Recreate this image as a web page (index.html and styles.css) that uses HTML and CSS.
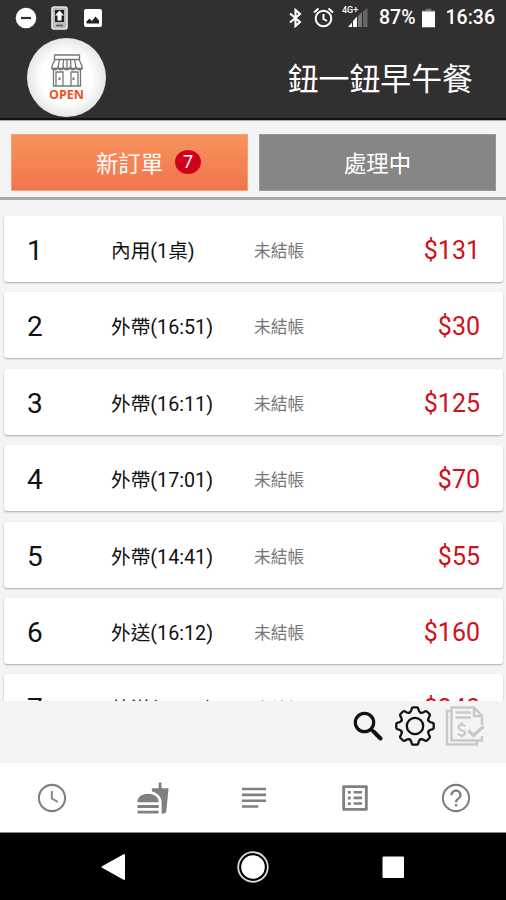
FILE: index.html
```html
<!DOCTYPE html>
<html lang="zh-Hant">
<head>
    <meta charset="UTF-8">
    <meta name="viewport" content="width=device-width, initial-scale=1.0">
    <title>鈕一鈕早午餐</title>
    <link rel="stylesheet" href="styles.css">
</head>
<body>
    <header>
        <div class="status-bar">
            <div class="status-left">
                <svg width="22" height="22" viewBox="0 0 22 22"><circle cx="11" cy="11" r="10.3" fill="#fff"/><path d="M6 11h10" stroke="#322f30" stroke-width="2.2"/></svg>
                <svg width="17" height="24" viewBox="0 0 17 24"><rect x="1" y="1" width="15" height="22" rx="2" fill="#bbb" stroke="#e8e8e8" stroke-width="1.6"/><path d="M4 4h9v12H4z" fill="#222"/><path d="M8.5 4.5l4.500 5H10.500v5h-4V9.500H4z" fill="#fff"/><path d="M5 19.500h7" stroke="#555" stroke-width="1.500"/></svg>
                <svg width="20" height="20" viewBox="0 0 20 20"><rect x="1" y="1" width="18" height="18" rx="2" fill="#fff"/><path d="M3.500 15.500v-2l3-3 2.500 2.500 3.500-4.500 3.500 4v3z" fill="#222"/></svg>
            </div>
            <div class="status-right">
                <svg class="bluetooth" width="15" height="20" viewBox="0 0 15 20" fill="none" stroke="#fff" stroke-width="2.100"><path d="M2 5.500l10 8.500L7.500 18V2l4.500 4L2 14.500"/></svg>
                <svg class="alarm" width="21" height="21" viewBox="0 0 21 21" fill="none" stroke="#fff" stroke-width="2"><circle cx="10.500" cy="11.500" r="7.800"/><path d="M10.500 7v5l3.500 2M1 5.500l4.500-4M20 5.500l-4.500-4"/></svg>
                <div class="signal">
                    <span>4G+</span>
                    <svg width="26" height="20" viewBox="0 0 26 20"><path d="M6 19h4V14.500z" fill="#fff"/><path d="M11 19h4V8.500l-4 4.500z" fill="#fff"/><path d="M16 19h4V4l-4 4z" fill="#777"/><path d="M21 19h4.500V0L21 3.500z" fill="#666"/></svg>
                </div>
                <span class="battery-text">87%</span>
                <svg class="battery" width="13" height="20" viewBox="0 0 14 20"><path d="M4 0h6v2h4v2H0V2h4z" fill="#777"/><path d="M0 3h14v17H0z" fill="#fff"/></svg>
                <span class="time">16:36</span>
            </div>
        </div>
        <div class="title-bar">
            <div class="shop-open">
                <svg width="32" height="33" viewBox="0 0 32 33" fill="none" stroke="#777" stroke-width="1.300">
                    <path d="M3.500 1h25v4.500h-25z"/>
                    <path d="M4 5.500L1 12v2.500h30V12l-3-6.500M8.500 5.500L7 14M12.500 5.500L12 14M16 5.500V14M19.500 5.500l.5 8.500M23.500 5.500L25 14"/>
                    <path d="M1 13.500c0 3 5 3 6 0 1 3 4.500 3 5.500 0 1 3 5.500 3 6.500 0 1 3 5 3 6 0 1 3 6 3 6 0"/>
                    <path d="M2.500 16v16h27V16M5 32V18h7v14M20 32V18h7v14"/>
                    <path d="M8.500 23.500v2.500M22.500 23.500v2.500" stroke-width="2"/>
                </svg>
                <span>OPEN</span>
            </div>
            <h1>鈕一鈕早午餐</h1>
        </div>
    </header>

    <div class="tabs">
        <button class="tab active">新訂單 <span class="badge">7</span></button>
        <button class="tab">處理中</button>
    </div>

    <main class="orders">
        <div class="order">
            <span class="number">1</span>
            <span class="type">內用(1桌)</span>
            <span class="state">未結帳</span>
            <span class="price">$131</span>
        </div>
        <div class="order">
            <span class="number">2</span>
            <span class="type">外帶(16:51)</span>
            <span class="state">未結帳</span>
            <span class="price">$30</span>
        </div>
        <div class="order">
            <span class="number">3</span>
            <span class="type">外帶(16:11)</span>
            <span class="state">未結帳</span>
            <span class="price">$125</span>
        </div>
        <div class="order">
            <span class="number">4</span>
            <span class="type">外帶(17:01)</span>
            <span class="state">未結帳</span>
            <span class="price">$70</span>
        </div>
        <div class="order">
            <span class="number">5</span>
            <span class="type">外帶(14:41)</span>
            <span class="state">未結帳</span>
            <span class="price">$55</span>
        </div>
        <div class="order">
            <span class="number">6</span>
            <span class="type">外送(16:12)</span>
            <span class="state">未結帳</span>
            <span class="price">$160</span>
        </div>
        <div class="order">
            <span class="number">7</span>
            <span class="type">外送(16:30)</span>
            <span class="state">未結帳</span>
            <span class="price">$240</span>
        </div>
    </main>

    <!-- Search, settings, checkout -->
    <div class="tools">
        <svg width="30" height="30" viewBox="0 0 30 30" fill="none" stroke="#111"><circle cx="11.500" cy="11.500" r="9.200" stroke-width="3.200"/><path d="M18 18l2.500 2.500" stroke-width="3"/><path d="M20.500 20.500l7 7" stroke-width="4" stroke-linecap="round"/></svg>
        <svg width="40" height="40" viewBox="-20 -20 40 40" fill="none" stroke="#111" stroke-width="2.300" stroke-linecap="round">
            <defs><path id="tooth" d="M-5.550-13.400C-4-14-3.900-14.800-3.600-16.200Q-3.200-18.700-1.800-18.700H1.800Q3.200-18.700 3.600-16.200C3.900-14.800 4-14 5.550-13.400"/></defs>
            <use href="#tooth"/>
            <use href="#tooth" transform="rotate(45)"/>
            <use href="#tooth" transform="rotate(90)"/>
            <use href="#tooth" transform="rotate(135)"/>
            <use href="#tooth" transform="rotate(180)"/>
            <use href="#tooth" transform="rotate(225)"/>
            <use href="#tooth" transform="rotate(270)"/>
            <use href="#tooth" transform="rotate(315)"/>
            <circle r="8.200"/>
        </svg>
        <svg class="bill" width="40" height="40" viewBox="0 0 40 40" fill="none" stroke="#c9c9c9" stroke-width="2.500">
            <path d="M6 5H2v33.500h30V35"/>
            <path d="M37 19V10l-8-8.500H6.500v33H37V30"/>
            <path d="M29 2v8h7M10.500 6.500H26M10.500 11.500H26"/>
            <path d="M23.500 24.500l5 5L38.500 20.500" stroke-width="3.200"/>
            <path d="M20 20.500c-1-2-6.500-2.500-6.500 1 0 3.500 6.500 2 6.500 5.200 0 3.500-6 3.200-7 .8M16.700 16v2.500M16.700 29v2.500" stroke-width="2.200"/>
        </svg>
    </div>

    <nav class="bottom-nav">
        <a><svg viewBox="0 0 24 24"><path d="M11.990 2C6.470 2 2 6.480 2 12s4.470 10 9.990 10C17.520 22 22 17.520 22 12S17.520 2 11.990 2zM12 20.500a8.500 8.500 0 1 1 0-17 8.500 8.500 0 0 1 0 17zM12.500 7h-1.300v5.700l4.600 2.700.6-1.100-3.900-2.300z"/></svg></a>
        <a><svg viewBox="0 0 24 24"><path d="M18.060 22.990h1.660c.84 0 1.530-.64 1.630-1.460L23 5.050h-5V1h-1.970v4.050h-4.970l.3 2.340c1.710.47 3.310 1.320 4.270 2.260 1.440 1.420 2.430 2.890 2.430 5.290zM1 21.990V21h15.030v.99c0 .55-.45 1-1.010 1H2.010c-.56 0-1.010-.45-1.010-1zm15.030-7c0-8-15.030-8-15.030 0zM1.020 17h15v2h-15z"/></svg></a>
        <a><svg viewBox="0 0 24 24"><path d="M3.500 4.800h17v1.800h-17zM3.500 8.900h17v1.800h-17zM3.500 13h17v1.800h-17zM3.500 17.100h11.500v1.800H3.500z"/></svg></a>
        <a><svg viewBox="0 0 24 24"><path d="M19 5v14H5V5h14m1.100-2H3.900c-.5 0-.9.4-.9.900v16.200c0 .4.400.9.900.9h16.200c.4 0 .9-.5.900-.9V3.900c0-.5-.5-.9-.9-.9zM11 7h6v1.800h-6V7zm0 4h6v1.800h-6V11zm0 4h6v1.800h-6zM7 7h2v2H7zm0 4h2v2H7zm0 4h2v2H7z"/></svg></a>
        <a><svg viewBox="0 0 24 24"><path d="M11.200 18h1.700v-1.800h-1.700V18zM12 2C6.480 2 2 6.480 2 12s4.480 10 10 10 10-4.480 10-10S17.520 2 12 2zm0 18.500a8.500 8.500 0 1 1 0-17 8.500 8.500 0 0 1 0 17zM12 6c-2.210 0-4 1.790-4 4h1.700c0-1.300 1-2.400 2.300-2.400s2.300 1.100 2.300 2.400c0 2-3.100 1.900-3.100 5h1.700c0-2.250 3.100-2.500 3.100-5 0-2.210-1.790-4-4-4z"/></svg></a>
    </nav>

    <footer class="system-nav">
        <svg width="34" height="34" viewBox="0 0 34 34"><path d="M28 5v24L6.500 17z" fill="#fff" stroke="#fff" stroke-width="2" stroke-linejoin="round"/></svg>
        <svg width="34" height="34" viewBox="0 0 34 34"><circle cx="17" cy="17" r="14.800" fill="none" stroke="#ddd" stroke-width="1.800"/><circle cx="17" cy="17" r="11.800" fill="#fff"/></svg>
        <svg width="34" height="34" viewBox="0 0 34 34"><rect x="6.500" y="6.500" width="21.500" height="21.500" rx="1" fill="#fff"/></svg>
    </footer>
</body>
</html>
```

FILE: styles.css
```css
* {
    box-sizing: border-box;
}

body {
    font-family: Roboto, "Noto Sans CJK TC", sans-serif;
    background-color: #f4f4f4;
    margin: 0;
    height: 900px;
    display: flex;
    flex-direction: column;
    overflow: hidden;
}

svg {
    display: block;
    flex: none;
}

header {
    background: #322f30;
    color: white;
    height: 120px;
    flex: none;
    border-bottom: 2px solid #111;
}

.status-bar {
    height: 35px;
    padding: 0 11px 0 15px;
    display: flex;
    justify-content: space-between;
    align-items: center;
}

.status-left {
    display: flex;
    align-items: center;
    gap: 14px;
}

.status-left svg:nth-child(2) {
    margin-right: 1px;
}

.status-right {
    display: flex;
    align-items: center;
    font-size: 19.500px;
    font-weight: 500;
}

.alarm {
    margin: 0 8px 0 10px;
}

.signal {
    display: flex;
    width: 26px;
    margin-right: 11px;
}

.signal span {
    font-size: 9px;
    line-height: 9px;
    width: 18px;
    margin-right: -18px;
    margin-top: -2px;
}

.battery {
    margin: 0 11px 0 6px;
}

.title-bar {
    display: flex;
    justify-content: space-between;
    align-items: center;
    height: 84px;
    padding: 0 33px 0 27px;
}

.title-bar h1 {
    margin: 5px 0 0;
    font-size: 30.900px;
    font-weight: 400;
    line-height: 40px;
}

.shop-open {
    width: 79px;
    height: 79px;
    border-radius: 50%;
    background: radial-gradient(circle, #fff 45%, #e2e2e2 75%);
    display: flex;
    flex-direction: column;
    align-items: center;
    padding-top: 16px;
}

.shop-open span {
    color: #f0501e;
    font-family: "Open Sans", sans-serif;
    font-size: 12.500px;
    font-weight: 700;
    line-height: 15px;
}

.tabs {
    display: grid;
    grid-template-columns: 1fr 1fr;
    gap: 11px;
    height: 80px;
    flex: none;
    padding: 13px 10px 6px 11px;
    border-top: 1px solid #aaa;
    border-bottom: 3px solid #aaa;
}

.tab {
    display: flex;
    align-items: center;
    justify-content: center;
    padding: 0 0 1px;
    border: 1px solid #999;
    background: #868686;
    color: white;
    font-family: inherit;
    font-size: 22.400px;
}

.tab.active {
    border-color: #f5a070;
    background: linear-gradient(#f8935a, #f1744f);
    padding-left: 38px;
}

.badge {
    width: 26px;
    height: 24px;
    margin-left: 12px;
    border-radius: 50%;
    background: #d0021b;
    font-size: 18px;
    line-height: 24px;
}

.orders {
    height: 501px;
    flex: none;
    overflow: hidden;
    padding: 16px 3px 0 4px;
    display: flex;
    flex-direction: column;
    gap: 10.400px;
}

.order {
    height: 66px;
    flex: none;
    display: flex;
    align-items: center;
    padding: 3px 23px 0 23px;
    border-radius: 3px;
    background: white;
    box-shadow: 0 1px 2px rgba(0, 0, 0, 0.3);
}

.number {
    width: 84px;
    font-size: 28px;
    color: #111;
}

.type {
    width: 143px;
    padding-bottom: 2px;
    font-size: 19.700px;
    color: #111;
}

.state {
    padding-bottom: 1px;
    font-size: 16.800px;
    color: #777;
}

.price {
    margin-left: auto;
    font-size: 25px;
    color: #d0111b;
}

.tools {
    height: 62px;
    flex: none;
    display: flex;
    justify-content: flex-end;
    padding: 5px 21px 0 0;
}

.tools svg:first-child {
    margin: 5px 12px 0 0;
}

.bill {
    margin-left: 10px;
}

.bottom-nav {
    height: 70px;
    flex: none;
    display: flex;
    padding-left: 1px;
    background: white;
    border-bottom: 1px solid #888;
}

.bottom-nav a {
    flex: 1;
    display: flex;
    align-items: center;
    justify-content: center;
}

.bottom-nav svg {
    width: 34px;
    height: 34px;
    fill: #808080;
}

.system-nav {
    flex: 1;
    display: flex;
    justify-content: center;
    align-items: center;
    gap: 106px;
    background: black;
}
```
